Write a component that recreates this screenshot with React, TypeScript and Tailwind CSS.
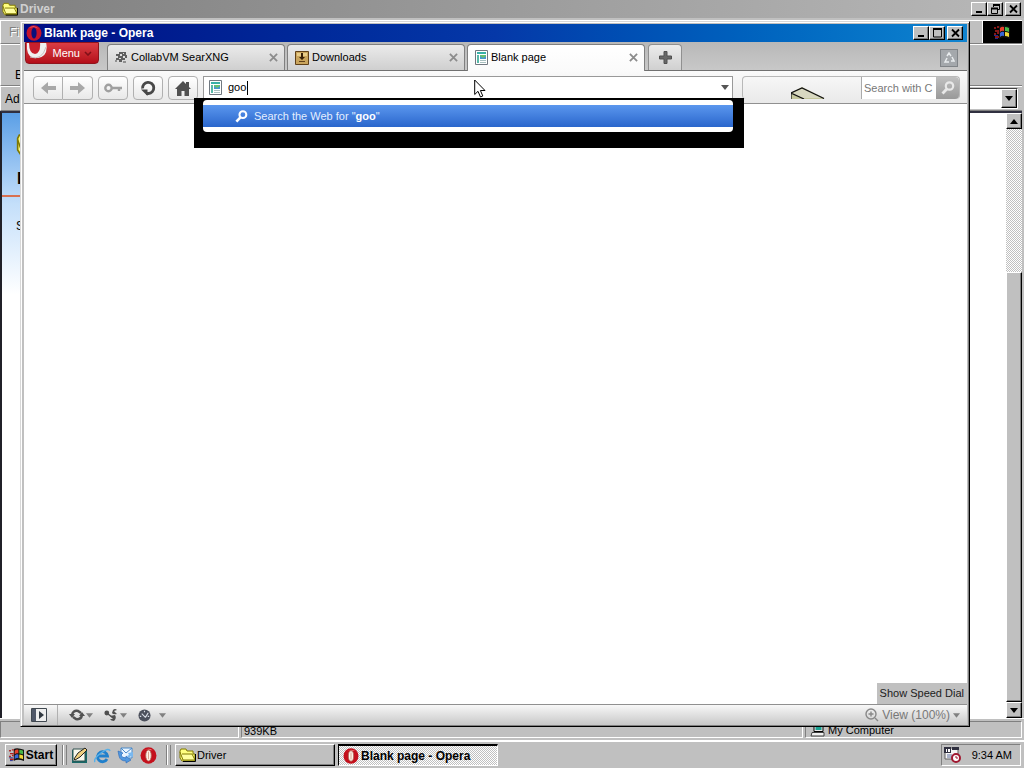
import type { ReactNode } from "react";

const raised =
  "border border-t-white border-l-white border-r-black border-b-black shadow-[inset_-1px_-1px_0_#808080]";
const glassButton =
  "flex h-6 items-center justify-center rounded-sm border border-[#b0b0b0] bg-linear-to-b from-white to-[#e8e8e8]";

function OperaLogo({ className = "" }: { className?: string }) {
  return (
    <svg viewBox="0 0 16 16" className={className} aria-hidden="true">
      <ellipse cx="8" cy="8" rx="7.5" ry="7.8" fill="#c4101c" />
      <path d="M3 4Q7 0 12 3L10 3Q5 1 3 4Z" fill="#f07070" />
      <ellipse cx="8" cy="8" rx="2.6" ry="5.2" fill="#fff0e8" stroke="#b06858" strokeWidth="0.8" />
      <path d="M8 4.5V11.5" stroke="#d8a890" />
    </svg>
  );
}

function OperaTitleLogo() {
  return (
    <svg viewBox="0 0 16 16" className="size-4" aria-hidden="true">
      <ellipse cx="8" cy="8" rx="7.5" ry="7.8" fill="#c4142c" />
      <path d="M3 3Q8-1 13 4Q10 2 7 2Z" fill="#ee6878" />
      <ellipse cx="8" cy="8" rx="2.6" ry="5.6" fill="#08107c" />
    </svg>
  );
}

function Folder({ className = "" }: { className?: string }) {
  return (
    <svg viewBox="0 0 17 14" className={className} aria-hidden="true">
      <path d="M1 3L2 1H7L8 3H14V6H16V13H3L1 10Z" fill="#ffff80" stroke="#807800" />
      <path d="M1 4L4 12H16L13 6H3" fill="#ffffa0" stroke="#807800" />
      <path d="M4 13.5H16.5V6" fill="none" stroke="#000" />
    </svg>
  );
}

function WindowsFlag({ className = "" }: { className?: string }) {
  return (
    <svg viewBox="0 0 17 15" className={className} aria-hidden="true">
      <path d="M5 1Q9-1 16 2V14Q9 11 5 14Z" fill="#101010" />
      <path d="M6 3Q8 1 10 2V6Q8 5 6 7Z" fill="#e8402c" />
      <path d="M11 2Q13 2 15 3V7Q13 6 11 6Z" fill="#48b848" />
      <path d="M6 8Q8 6 10 7V11Q8 10 6 12Z" fill="#3868d8" />
      <path d="M11 7Q13 7 15 8V12Q13 11 11 11Z" fill="#f0d838" />
      <path d="M0 3H2M3 2H5M1 6H5M0 9H2M3 8H5M1 12H5" stroke="#b02020" strokeWidth="1.5" />
      <path d="M0 10.5H4M1 13.5H4" stroke="#202890" />
    </svg>
  );
}

function CaptionButton({ kind }: { kind: "min" | "max" | "restore" | "close" }) {
  const shapes = {
    min: <path d="M3 9H9" strokeWidth="2" />,
    max: (
      <>
        <path d="M2.5 1.5H10.5V10H2.5Z" />
        <path d="M2 2H11" strokeWidth="2" />
      </>
    ),
    restore: (
      <>
        <path d="M4.5 4V1.5H10.5V6.5H8M2.5 5.5H8.5V10.5H2.5Z" />
        <path d="M4 2H11M2 5.5H9" strokeWidth="2" />
      </>
    ),
    close: <path d="M3 2.5L10 9.5M10 2.5L3 9.5" strokeWidth="1.8" />,
  };
  return (
    <button aria-label={kind} className={`flex h-3.5 w-4 items-center justify-center bg-[#c0c0c0] ${raised}`}>
      <svg viewBox="0 0 13 12" className="h-3 w-[13px] shrink-0" fill="none" stroke="#000">
        {shapes[kind]}
      </svg>
    </button>
  );
}

function CaptionButtons({ middle }: { middle: "max" | "restore" }) {
  return (
    <div className="flex">
      <CaptionButton kind="min" />
      <CaptionButton kind={middle} />
      <div className="ml-0.5 flex">
        <CaptionButton kind="close" />
      </div>
    </div>
  );
}

function Arrow({ up = false, className = "w-2" }: { up?: boolean; className?: string }) {
  return (
    <svg viewBox="0 0 8 5" className={`h-[5px] ${className}`} fill="currentColor" aria-hidden="true">
      <path d={up ? "M0 5L4 0L8 5Z" : "M0 0H8L4 5Z"} />
    </svg>
  );
}

function PageIcon() {
  return (
    <svg viewBox="0 0 13 15" className="h-[15px] w-[13px] shrink-0" aria-hidden="true">
      <path d="M.5.5H12.5V14.5H.5Z" fill="#fff" stroke="#707880" />
      <path d="M2 2H11V4H2Z" fill="#38b0a8" />
      <path d="M2 5H4V13H2Z" fill="#58b8a8" />
      <path d="M5 5H11V9H5Z" fill="#68c070" />
      <path d="M5 6L8 8L11 6V9H5Z" fill="#4898d0" />
      <path d="M5 10.5H11M5 12.5H11" stroke="#a8c0c0" />
    </svg>
  );
}

function Magnifier({ className = "" }: { className?: string }) {
  return (
    <svg viewBox="0 0 14 14" className={className} fill="none" stroke="currentColor" strokeWidth="2.2" aria-hidden="true">
      <circle cx="8.5" cy="5" r="3.7" />
      <path d="M5.8 8L1.5 12.5" strokeWidth="2.8" />
    </svg>
  );
}

function SearxIcon() {
  return (
    <svg viewBox="0 0 13 13" className="size-[13px] shrink-0" aria-hidden="true">
      <path d="M1 3H4V1H11V4H12V7H10V9H7V11H4V9H1V7H3V5H1Z" fill="#606060" />
      <path d="M5 3H7V5H5ZM8 5H10V7H8ZM4 7H6V8H4ZM8 2H9V3H8Z" fill="#e0e0e0" />
      <path d="M8 10H11V12H8ZM0 9H2V11H0Z" fill="#909090" />
    </svg>
  );
}

function DownloadIcon() {
  return (
    <svg viewBox="0 0 14 14" className="size-3.5 shrink-0" aria-hidden="true">
      <path d="M.5.5H13.5V13.5H.5Z" fill="#c9a45c" stroke="#604018" />
      <path d="M2 2H12V5H2Z" fill="#e8cc88" />
      <path d="M6 2H8V6H10L7 9L4 6H6Z" fill="#382008" />
      <path d="M4 10.5H10" stroke="#604018" />
    </svg>
  );
}

function Tab({ icon, title, active = false }: { icon: ReactNode; title: string; active?: boolean }) {
  return (
    <div
      className={`flex w-[178px] items-center rounded-t border border-b-0 border-[#808080] pr-1.5 pl-[7px] ${
        active
          ? "h-7 bg-linear-to-b from-white to-[#fafafa] pb-0.5"
          : "h-[26px] bg-linear-to-b from-[#ebebeb] to-[#cfcfcf]"
      }`}
    >
      <button className="flex flex-1 items-center gap-[3px] text-left">
        {icon}
        {title}
      </button>
      <button aria-label={`Close ${title}`}>
        <svg viewBox="0 0 10 10" className="size-[9px]" fill="none" stroke="#8c8c8c" strokeWidth="2">
          <path d="M1 1L9 9M9 1L1 9" />
        </svg>
      </button>
    </div>
  );
}

function ExplorerWindow() {
  return (
    <section className="flex h-full flex-col bg-[#c0c0c0]">
      <header className="flex h-[18px] items-center bg-linear-to-r from-[#808080] to-[#b8b8b8] pr-[3px] pl-0.5 text-[12px] font-bold text-[#d0d0d0]">
        <Folder className="mr-0.5 h-3.5 w-4" />
        <h1 className="flex-1">Driver</h1>
        <CaptionButtons middle="restore" />
      </header>
      <nav className="mt-0.5 mr-0.5 flex h-6 justify-between border-t border-b border-l border-t-white border-b-[#808080] border-l-white">
        <button className="pl-2 text-[12px] text-[#808080] [text-shadow:1px_1px_0_#ffffff]">File</button>
        <div className="flex w-10 items-center justify-center border-l border-white bg-black">
          <WindowsFlag className="h-[15px] w-[17px]" />
        </div>
      </nav>
      <div className="mr-0.5 flex h-[42px] items-end border-t border-b border-l border-t-white border-b-[#808080] border-l-white pb-px pl-3.5 text-[12px]">
        <button>Back</button>
      </div>
      <div className="mr-0.5 flex h-[25px] items-center gap-1 border-t border-b border-l border-t-white border-b-[#808080] border-l-white pr-1 pl-1 text-[12px]">
        <label htmlFor="location">Address</label>
        <div className="flex h-[21px] flex-1 border border-t-[#404040] border-r-white border-b-white border-l-[#404040] bg-white">
          <input id="location" className="min-w-0 flex-1 outline-none" />
          <button aria-label="Show locations" className={`flex w-4 items-center justify-center bg-[#c0c0c0] ${raised}`}>
            <Arrow />
          </button>
        </div>
      </div>
      <div className="mr-0.5 flex min-h-0 flex-1 border-t-2 border-l-2 border-t-[#303040] border-l-[#202028] bg-white">
        <aside className="w-48 bg-linear-to-b from-[#5a9fe6] via-[#c4dffa] via-15% to-white to-30%">
          <div className="flex h-[84px] flex-col items-start border-b-2 border-[#d87050] pt-5 pl-3.5">
            <Folder className="h-6 w-7" />
            <span className="mt-3 pl-px text-[16px] leading-5 font-bold">Driver</span>
          </div>
          <p className="pt-5 pl-3.5 text-[12px]">Select an item</p>
        </aside>
        <div className="flex-1" />
        <div className="flex w-4 flex-col bg-[repeating-conic-gradient(#c0c0c0_0_25%,#ffffff_0_50%)] bg-size-[2px_2px]">
          <button aria-label="Scroll up" className={`flex h-4 items-center justify-center bg-[#c0c0c0] ${raised}`}>
            <Arrow up />
          </button>
          <div className="flex-1" />
          <div className={`h-[71%] bg-[#c0c0c0] ${raised}`} />
          <button aria-label="Scroll down" className={`flex h-4 items-center justify-center bg-[#c0c0c0] ${raised}`}>
            <Arrow />
          </button>
        </div>
      </div>
      <footer className="flex h-[22px] gap-0.5 border-t border-white pt-0.5 pr-0.5 pb-0.5 text-[11px] leading-[18px]">
        <div className="w-[239px] border border-t-[#808080] border-r-white border-b-white border-l-[#808080]" />
        <div className="flex-1 border border-t-[#808080] border-r-white border-b-white border-l-[#808080] pl-0.5">939KB</div>
        <div className="flex w-[217px] items-center gap-0.5 border border-t-[#808080] border-r-white border-b-white border-l-[#808080] pl-1">
          <svg viewBox="0 0 15 14" className="h-3.5 w-4" aria-hidden="true">
            <path d="M3.5.5H12.5V8.5H3.5Z" fill="#e8e8e8" stroke="#000" />
            <path d="M5 2H11V7H5Z" fill="#18a090" />
            <path d="M1.5 9.5H13.5V13H.5Z" fill="#f0f0f0" stroke="#404040" />
          </svg>
          My Computer
        </div>
      </footer>
    </section>
  );
}

function SuggestionPopup() {
  return (
    <div className="absolute top-full -right-3 -left-[10px] z-10 h-[50px] bg-black pt-0.5 pr-[11px] pb-4 pl-[9px]">
      <div className="h-8 rounded bg-white py-[5px]">
        <button className="flex h-[22px] w-full items-center gap-1.5 bg-linear-to-b from-[#5b97ee] to-[#2a66cc] pl-8 text-left text-[#e4efff]">
          <Magnifier className="size-[13px] text-white" />
          <span>
            Search the Web for "<b className="text-white">goo</b>"
          </span>
        </button>
      </div>
    </div>
  );
}

function Toolbar() {
  return (
    <div className="flex h-8 shrink-0 items-start bg-linear-to-b from-[#fafafa] to-[#e9e9e9] pt-[5px] pr-[7px] pl-[9px] text-[#555]">
      <div className="flex">
        <button aria-label="Back" className={`${glassButton} w-[30px] rounded-r-none`}>
          <svg viewBox="0 0 15 12" className="h-3 w-[15px]" fill="#a8a8a8"><path d="M0 6L7 0V4H15V8H7V12Z" /></svg>
        </button>
        <button aria-label="Forward" className={`${glassButton} w-[30px] rounded-l-none border-l-0`}>
          <svg viewBox="0 0 15 12" className="h-3 w-[15px]" fill="#a8a8a8"><path d="M15 6L8 0V4H0V8H8V12Z" /></svg>
        </button>
      </div>
      <button aria-label="Wand" className={`${glassButton} ml-[5px] w-[30px]`}>
        <svg viewBox="0 0 18 10" className="h-2.5 w-[18px]" fill="none" stroke="#a0a0a0" strokeWidth="2.4">
          <circle cx="4.5" cy="5" r="3.2" /><path d="M7.5 5H18M15 5V8" />
        </svg>
      </button>
      <button aria-label="Reload" className={`${glassButton} ml-[5px] w-[30px]`}>
        <svg viewBox="0 0 16 16" className="size-4" fill="none" stroke="#484848" strokeWidth="2.8">
          <path d="M2.6 8.5A5.6 5.6 0 1 1 8.5 13.5H6" /><path d="M1 9.5H7.5V16Z" fill="#484848" stroke="none" />
        </svg>
      </button>
      <button aria-label="Home" className={`${glassButton} ml-[5px] w-[30px]`}>
        <svg viewBox="0 0 16 15" className="h-[15px] w-4" fill="#505050">
          <path d="M8 0L11 3V1H14V6L16 8H14V15H9.5V10H6.5V15H2V8H0Z" />
        </svg>
      </button>
      <div className="relative ml-[5px] flex h-[23px] flex-1 items-center border border-[#999] bg-white pr-[3px] pl-[5px]">
        <PageIcon />
        <input aria-label="Address" defaultValue="goo" className="ml-1.5 min-w-0 flex-1 text-black outline-none" />
        <span className="absolute top-1 left-[43px] h-3.5 w-px bg-black" />
        <button aria-label="Show history"><Arrow /></button>
        <SuggestionPopup />
      </div>
      <div className="ml-[9px] flex h-[23px] w-[218px] rounded border border-[#b8b8b8] border-b-0">
        <div className="flex w-[118px] items-end pl-12">
          <svg viewBox="0 0 34 12" className="h-3 w-[34px]" aria-hidden="true">
            <path d="M0 6L11 0L33 11V12H0Z" fill="#c4c69c" />
            <path d="M1 7L11 1L33 11L12 11Z" fill="#d8d8c0" />
            <path d="M0 12V6L11 1L33 11.5M0 6L13 12" fill="none" stroke="#101010" strokeWidth="1.2" />
          </svg>
        </div>
        <input
          aria-label="Search"
          placeholder="Search with C"
          className="h-[22px] w-[75px] min-w-0 border-l border-[#aaa] bg-white pl-0.5 outline-none placeholder:text-[#787878] placeholder:opacity-100"
        />
        <button aria-label="Search the web" className="flex h-[22px] flex-1 items-center justify-center rounded-r bg-linear-to-b from-[#c0c0c0] to-[#999] text-[#e8e8e8]">
          <Magnifier className="size-3.5" />
        </button>
      </div>
    </div>
  );
}

function OperaWindow() {
  return (
    <section className="absolute top-[21px] right-[54px] bottom-[13px] left-5 flex flex-col border border-t-[#d8d8d8] border-r-black border-b-black border-l-[#d8d8d8] bg-[#c0c0c0] pt-0.5 pr-0.5 pb-px pl-[3px] text-[11px] shadow-[inset_1px_1px_0_#fff,inset_-1px_-1px_0_#808080]">
      <header className="flex h-[18px] shrink-0 items-center bg-linear-to-r from-[#000c84] via-[#0538a8] to-[#1084d0] pr-1 pl-0.5 text-[12px] font-bold text-white">
        <OperaTitleLogo />
        <h2 className="ml-0.5 flex-1">Blank page - Opera</h2>
        <CaptionButtons middle="max" />
      </header>
      <div className="flex h-[29px] shrink-0 border-b border-[#707070] bg-linear-to-b from-[#b8b8b8] to-[#c8c8c8]">
        <button className="relative mr-2 ml-px flex h-[22px] w-[74px] items-center justify-end gap-1 overflow-hidden rounded-b border border-[#90141c] bg-linear-to-b from-[#dc3c44] to-[#b40c18] pr-1.5 text-white">
          <svg viewBox="0 0 24 20" className="absolute -top-px left-0 h-5 w-6" aria-hidden="true">
            <path d="M1 0H20Q23 14 12 16Q2 17 1 7Z" fill="#f0f0f0" />
            <path d="M3 0H14Q15 11 9 12Q3 12 3 0Z" fill="#c8202c" />
            <path d="M4 15Q16 19 20 5" fill="none" stroke="#c8c0c0" />
          </svg>
          Menu
          <svg viewBox="0 0 8 5" className="h-[5px] w-2" fill="none" stroke="#801018" strokeWidth="1.6" aria-hidden="true">
            <path d="M1 1L4 4L7 1" />
          </svg>
        </button>
        <div className="flex gap-0.5 pt-0.5">
          <Tab icon={<SearxIcon />} title="CollabVM SearXNG" />
          <Tab icon={<DownloadIcon />} title="Downloads" />
          <Tab icon={<PageIcon />} title="Blank page" active />
          <button aria-label="New tab" className="ml-px flex h-[26px] w-[34px] items-center justify-center rounded-t border border-b-0 border-[#909090] bg-linear-to-b from-[#ececec] to-[#d0d0d0]">
            <svg viewBox="0 0 13 13" className="size-[13px]"><path d="M5 .5H8V5H12.5V8H8V12.5H5V8H.5V5H5Z" fill="#686868" stroke="#505050" /></svg>
          </button>
        </div>
        <button aria-label="Closed tabs" className="mt-[7px] mr-[9px] ml-auto flex size-[18px] items-center justify-center border border-[#808488] bg-[#a4a8ac]">
          <svg viewBox="0 0 12 12" className="size-3" fill="none" stroke="#e8ecee" strokeWidth="1.5">
            <path d="M4 4L6 1L8 4M9 5L11 9H8M6 10H2L4 6" />
          </svg>
        </button>
      </div>
      <Toolbar />
      <main className="flex min-h-0 flex-1 items-end justify-end border-y border-[#909090] bg-white">
        <button className="h-[21px] bg-[#c0c0c0] px-[3px] text-[#202020]">Show Speed Dial</button>
      </main>
      <footer className="flex h-5 shrink-0 items-center bg-linear-to-b from-[#f8f8f8] to-[#c8c8c8] pr-[7px] text-[#505050]">
        <div className="flex h-full w-[34px] items-center justify-center border-r border-[#b0b0b0] pr-1">
          <button aria-label="Panels">
            <svg viewBox="0 0 16 14" className="h-3.5 w-4">
              <path d="M.5.5H15.5V13.5H.5Z" fill="#eee" stroke="#404850" />
              <path d="M1 1H5V13H1Z" fill="#505868" /><path d="M8 3L13 7L8 11Z" fill="#303840" />
            </svg>
          </button>
        </div>
        <button aria-label="Synchronize" className="ml-[11px] flex items-center gap-px">
          <svg viewBox="0 0 16 12" className="h-3 w-4" fill="none" stroke="#505050" strokeWidth="2.5">
            <path d="M3 6Q4 1 9 2L12 4M13 6Q12 11 7 10L4 8" />
            <path d="M0 5H6L3 9ZM10 7H16L13 3Z" fill="#505050" stroke="none" />
          </svg>
          <Arrow className="w-[7px] text-[#808080]" />
        </button>
        <button aria-label="Share" className="ml-[11px] flex items-center gap-0.5">
          <svg viewBox="0 0 14 12" className="h-3 w-3.5" fill="#505050">
            <circle cx="2.8" cy="4" r="2.4" />
            <path d="M8 4L9 1Q11-1 13 1L10 2L13 5Q9 6 8 4Z" />
            <path d="M6 7L11 6Q13 9 10 12Q7 12 6 10H9Z" />
            <path d="M4 5L8 8" fill="none" stroke="#505050" strokeWidth="1.5" />
          </svg>
          <Arrow className="w-[7px] text-[#808080]" />
        </button>
        <button aria-label="Turbo" className="ml-[11px] flex items-center gap-2">
          <svg viewBox="0 0 14 14" className="size-[13px]">
            <circle cx="7" cy="7" r="6.5" fill="#4c505c" />
            <path d="M4 5L8 9M7 2V3.5M11 4L8 9M2 8H3.5M10.5 8H12" stroke="#d8dce4" strokeWidth="1.2" />
          </svg>
          <Arrow className="w-[7px] text-[#808080]" />
        </button>
        <button className="ml-auto flex items-center gap-[3px] text-[12px] text-[#787878]">
          <svg viewBox="0 0 14 14" className="size-3.5" fill="none" stroke="#888" strokeWidth="1.4">
            <circle cx="6" cy="6" r="5" /><path d="M3.5 6H8.5M6 3.5V8.5M10 10L13 13" />
          </svg>
          View (100%)
          <Arrow className="w-[7px] text-[#808080]" />
        </button>
      </footer>
    </section>
  );
}

function Grip() {
  return <span className="h-5 w-1 border-x border-r-[#808080] border-l-white shadow-[-1px_0_0_#808080]" />;
}

function Taskbar() {
  return (
    <footer className="relative flex h-7 shrink-0 items-center border-t-2 border-white bg-[#c0c0c0] pt-0.5 pr-[3px] pb-0.5 pl-[5px] text-[11px]">
      <button className={`flex h-[22px] w-[52px] items-center justify-center gap-px bg-[#c0c0c0] text-[12px] font-bold ${raised}`}>
        <WindowsFlag className="h-3.5 w-4" />
        Start
      </button>
      <div className="ml-1.5 flex"><Grip /></div>
      <div className="ml-1 flex gap-1.5">
        <button aria-label="Show desktop">
          <svg viewBox="0 0 17 17" className="size-[17px]">
            <path d="M1 3H16V16H1Z" fill="#186868" /><path d="M2 2H14V14H2Z" fill="#f8f8ec" stroke="#305050" />
            <path d="M3 12L7 6L14 1L16 3L9 10L4 13Z" fill="#f0d080" stroke="#202020" />
          </svg>
        </button>
        <button aria-label="Internet Explorer">
          <svg viewBox="0 0 17 17" className="size-[17px]" fill="none">
            <path d="M13 12A5 5 0 1 1 13.5 9H5" stroke="#2080cc" strokeWidth="2.8" />
            <path d="M1 15Q-1 12 7 6Q15 0 16 4" stroke="#58b0e8" strokeWidth="1.5" />
          </svg>
        </button>
        <button aria-label="Outlook Express">
          <svg viewBox="0 0 17 17" className="size-[17px]">
            <path d="M4 1H15V11H4Z" fill="#e8f4ff" stroke="#4888c8" /><path d="M4 1L9 6L15 1" fill="none" stroke="#4888c8" />
            <path d="M1 4L6 6L4 8Q5 11 9 11V9L14 13L9 16V14Q3 14 2 9Z" fill="#5098e0" stroke="#2868b8" strokeWidth=".6" />
            <path d="M11 6L16 5V10L14 9L12 11L10 9L12 8Z" fill="#78b8f0" />
          </svg>
        </button>
        <button aria-label="Opera"><OperaLogo className="size-[17px]" /></button>
      </div>
      <div className="mr-1 ml-2.5 flex"><Grip /></div>
      <button className={`flex h-[22px] w-40 items-center gap-px bg-[#c0c0c0] pl-[3px] ${raised}`}>
        <Folder className="h-3.5 w-[17px]" />
        Driver
      </button>
      <button className="ml-[3px] flex h-[22px] w-40 items-center gap-0.5 border border-t-2 border-t-black border-r-white border-b-white border-l-black bg-[repeating-conic-gradient(#c0c0c0_0_25%,#ffffff_0_50%)] bg-size-[2px_2px] pl-1 text-[12px] font-bold">
        <OperaLogo className="size-4" />
        Blank page - Opera
      </button>
      <div className="ml-auto flex h-[22px] w-20 items-center justify-between border border-t-[#808080] border-r-white border-b-white border-l-[#808080] pr-2 pl-0.5">
        <svg viewBox="0 0 17 16" className="h-4 w-[17px]" aria-hidden="true">
          <path d="M1 1H14V12H1Z" fill="#f4f4f4" stroke="#606060" /><path d="M0 0H7V6H0ZM8 0H15V3H8Z" fill="#303040" />
          <path d="M2 2H3V5H2ZM4 2H6V5H4Z" fill="#fff" /><path d="M3 8H8M3 10H8" stroke="#6070a0" />
          <circle cx="12" cy="11" r="4" fill="#fff" stroke="#a01830" strokeWidth="2" /><path d="M12 9V11H14" fill="none" stroke="#a01830" />
        </svg>
        <time className="whitespace-nowrap">9:34 AM</time>
      </div>
    </footer>
  );
}

export default function App() {
  return (
    <div className="flex h-screen flex-col overflow-hidden bg-[#c0c0c0] font-['Liberation_Sans',Arial,sans-serif] text-black">
      <div className="relative min-h-0 flex-1">
        <ExplorerWindow />
        <OperaWindow />
        <svg viewBox="0 0 12 19" className="absolute top-[79px] left-[474px] z-20 h-[19px] w-3" aria-hidden="true">
          <path d="M.7 1V15.5L4 12.3L6.5 18L8.8 17L6.4 11.5H11Z" fill="#fff" stroke="#000" />
        </svg>
      </div>
      <Taskbar />
    </div>
  );
}
